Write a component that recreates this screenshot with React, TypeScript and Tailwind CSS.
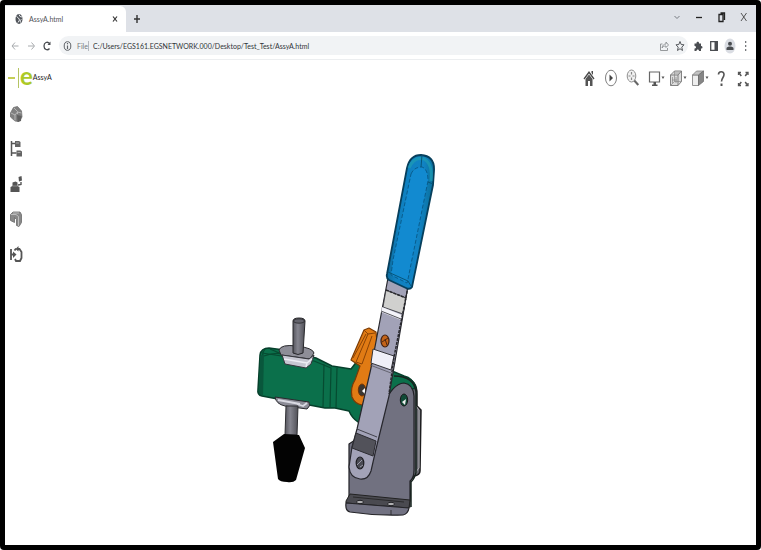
import React from "react";

type IconProps = { children: React.ReactNode; className?: string };

const Icon = ({ children, className = "h-5 w-[22px]" }: IconProps) => (
  <svg viewBox="0 0 22 20" className={className} fill="none" stroke="currentColor" aria-hidden="true">
    {children}
  </svg>
);

const SmallIcon = ({ children }: IconProps) => (
  <svg viewBox="0 0 16 16" className="size-4" fill="none" stroke="currentColor" aria-hidden="true">
    {children}
  </svg>
);

const windowButtons = [
  { label: "Search tabs", icon: <path d="M8.5 9l2.5 2.5L13.5 9" stroke="#777b82" /> },
  { label: "Minimize", icon: <path d="M8 10.5h6" stroke="#222" strokeWidth="1.3" /> },
  {
    label: "Restore",
    icon: <path d="M9 7.5h4v7H9zM10.5 6h4v7" stroke="#222" strokeWidth="1.3" />,
  },
  { label: "Close", icon: <path d="M9 6l5.5 8M14.5 6L9 14" stroke="#444" strokeWidth="0.9" /> },
];

const viewerTools = [
  {
    label: "Home",
    icon: (
      <>
        <path d="M5.5 10.5L11 3l5.5 7.5-1 1L11 5.5l-4.5 6z" fill="#4a4a4a" stroke="none" />
        <path d="M13.5 3H15v4l-1.5-2z" fill="#4a4a4a" stroke="none" />
        <path d="M7.5 11L11 6.500l3.500 4.500v7H12v-5h-2v5H7.500z" fill="#555" stroke="none" />
      </>
    ),
  },
  {
    label: "Play",
    icon: (
      <>
        <ellipse cx="11" cy="10" rx="5.5" ry="7.8" fill="#fff" stroke="#707070" strokeWidth="0.9" />
        <path d="M9.5 6.500l3.500 3.500-3.500 3.500z" fill="#444" stroke="none" />
      </>
    ),
  },
  {
    label: "Zoom",
    icon: (
      <>
        <ellipse cx="9.5" cy="8" rx="4.3" ry="6" fill="#f1f1f1" stroke="#858585" strokeWidth="0.9" />
        <path d="M9.500 4v2.500M9.500 9.500V12M6.500 8h2M10.500 8h2" stroke="#888" strokeWidth="1.2" />
        <path d="M12.300 12.500l4 4.500" stroke="#666" strokeWidth="2" />
      </>
    ),
  },
  {
    label: "Display",
    icon: (
      <>
        <path d="M5.500 4h10v10h-10z" fill="#fff" stroke="#666" strokeWidth="1.2" />
        <path d="M9.500 14H12v2.500h1.500V18H8v-1.500h1.500z" fill="#555" stroke="none" />
        <path d="M17.500 8.500h3l-1.500 2.500z" fill="#555" stroke="none" />
      </>
    ),
  },
  {
    label: "View mode",
    icon: (
      <>
        <path d="M4.500 7l4-4h7v10.500L12 17.500H4.500zM4.500 7H12v10.500M12 7l3.500-4" fill="#dcdcdc" stroke="#777" strokeWidth="0.9" />
        <path d="M8.500 3v10.500h7M8.500 13.500l-4 4M6.500 9v6M10 9v6M6 12h5M9 5h5" stroke="#888" strokeWidth="0.7" />
        <path d="M17.500 8.500h3l-1.500 2.500z" fill="#555" stroke="none" />
      </>
    ),
  },
  {
    label: "Orientation",
    icon: (
      <>
        <path d="M4.500 7h6v10.500h-6z" fill="#eee" stroke="#888" strokeWidth="0.9" />
        <path d="M4.500 7l4-4h7l-5 4z" fill="#c2c2c2" stroke="#777" strokeWidth="0.7" />
        <path d="M10.500 7l5-4v10.500l-5 4z" fill="#868686" stroke="#666" strokeWidth="0.7" />
        <path d="M17.500 8.500h3l-1.500 2.500z" fill="#555" stroke="none" />
      </>
    ),
  },
  {
    label: "Help",
    icon: (
      <>
        <path d="M8.500 6.500c0-3.500 5.500-4 5.500 0 0 3-2.500 3.500-2.500 7" stroke="#555" strokeWidth="1.6" />
        <path d="M10.500 15.500h2V18h-2z" fill="#555" stroke="none" />
      </>
    ),
  },
  {
    label: "Full screen",
    icon: (
      <>
        <path d="M6.500 7V4.500H9M13.500 4.500H16V7M6.500 15v2.500H9M16 15v2.500h-2.500" stroke="#555" strokeWidth="1.3" />
        <path d="M7 5l2.300 3M15.500 5l-2.300 3M7 17l2.300-3M15.500 17l-2.300-3" stroke="#555" strokeWidth="1.5" />
      </>
    ),
  },
];

const sideTools = [
  {
    label: "Assembly",
    icon: (
      <>
        <path d="M5.500 9l3-5.500 4-1 4 4.500.5 6-3 4.500-4-.5-4.500-4z" fill="#808080" stroke="#707070" strokeWidth="0.8" />
        <path d="M6 9l4 2v5.500M10 11l2.500-3 4 1M9 4l3.500 3.500V10" stroke="#bbb" strokeWidth="0.9" />
        <path d="M12 11l4.500 1-.5 5-3.500 1z" fill="#606060" stroke="none" />
      </>
    ),
  },
  {
    label: "Structure tree",
    icon: (
      <>
        <path d="M6.500 2v15M6.500 4.500h4M6.500 14h5" stroke="#555" strokeWidth="1.5" />
        <path d="M10 2h4l1.500 1v5H10zM11.500 11.500h4l1.500 1v5h-5.500z" fill="#636363" stroke="none" />
        <path d="M11 4h3M12.500 13.500h3" stroke="#bbb" strokeWidth="0.8" />
      </>
    ),
  },
  {
    label: "Explode",
    icon: (
      <>
        <path d="M5.500 13l2-1V8.500l3-1 2 1V12l2 1v5h-9z" fill="#555" stroke="none" />
        <path d="M13.500 3l3-1 .5 4.500-3 1z" fill="#555" stroke="none" />
        <path d="M16 8v2.500l-3 .5" stroke="#555" strokeWidth="1.4" />
        <path d="M7.500 12h5" stroke="#999" strokeWidth="0.8" />
      </>
    ),
  },
  {
    label: "Section",
    icon: (
      <>
        <path d="M5.500 5.500L8 3h7l1.500 2.500v8L14 17.500l-2.500-1v-6l-2-2v5l-4-2z" fill="#898989" stroke="#696969" strokeWidth="0.8" />
        <path d="M6 5.500h5l2.500 2V17M8 4h6" stroke="#ccc" strokeWidth="0.8" />
      </>
    ),
  },
  {
    label: "Rotate",
    icon: (
      <>
        <path d="M6 5v11M6 10.500h3.500" stroke="#555" strokeWidth="1.8" />
        <path d="M8 7.500l3.500 3L8 14z" fill="#555" stroke="none" />
        <path d="M9.500 6.500L11 4.500M12 5h2.500l2 3v6L15 17h-4l-1-2" stroke="#555" strokeWidth="1.8" />
        <path d="M13.500 2L10.500 5l3 2.500z" fill="#555" stroke="none" />
      </>
    ),
  },
];

const TabStrip = () => (
  <div className="flex h-[27px] items-stretch bg-[#dee1e7]">
    <div className="mt-px flex w-[121px] items-center rounded-tr-md bg-white pr-[3px] pl-2">
      <SmallIcon>
        <ellipse cx="6" cy="8" rx="3.5" ry="5" fill="#50545a" stroke="none" />
        <path d="M3.500 5.500l2 1.500 1 2-1.500 2.500M6 3.500l1 2 2 .5M8.500 8.500l-1.500 1 .5 2" stroke="#e8eaed" />
      </SmallIcon>
      <span className="flex-1 text-[7px] text-[#4f5358]">AssyA.html</span>
      <button aria-label="Close tab" className="text-[#333]">
        <SmallIcon>
          <path d="M6 5.500l4 5M10 5.500l-4 5" strokeWidth="1.2" />
        </SmallIcon>
      </button>
    </div>
    <button aria-label="New tab" className="ml-[3px] text-[#333]">
      <SmallIcon>
        <path d="M8 4v8M5 8h6" strokeWidth="1.4" />
      </SmallIcon>
    </button>
    <div className="ml-auto flex items-center pr-0.5 pb-1">
      {windowButtons.map((b) => (
        <button key={b.label} aria-label={b.label}>
          <Icon>{b.icon}</Icon>
        </button>
      ))}
    </div>
  </div>
);

const AddressBar = () => (
  <div className="flex h-7 items-center border-b border-[#eceef0] bg-white px-0.5">
    <button aria-label="Back" className="text-[#a8abae]">
      <SmallIcon>
        <path d="M11.500 8h-6M8 4.500L5 8l3 3.500" />
      </SmallIcon>
    </button>
    <button aria-label="Forward" className="text-[#a8abae]">
      <SmallIcon>
        <path d="M5 8h6M8.500 4.500l3 3.500-3 3.500" />
      </SmallIcon>
    </button>
    <button aria-label="Reload" className="text-[#4a4d51]">
      <SmallIcon>
        <path d="M10.500 5.500C8.500 3 5 4.500 5 8s3.500 5 5.500 2.500" strokeWidth="1.3" />
        <path d="M11.500 3.500V7h-3z" fill="currentColor" stroke="none" />
      </SmallIcon>
    </button>
    <div className="ml-1 flex h-[19px] flex-1 items-center rounded-full bg-[#f1f3f5] pl-0.5">
      <span className="text-[#5f6368]">
        <SmallIcon>
          <ellipse cx="6.5" cy="8" rx="3.3" ry="4.3" />
          <path d="M6.500 7.500V11M6.500 5v1.200" strokeWidth="1.2" />
        </SmallIcon>
      </span>
      <label htmlFor="address" className="w-3 border-r border-[#b6b9bd] text-[7px] leading-[10px] text-[#75797d]">
        File
      </label>
      <input
        id="address"
        defaultValue="C:/Users/EGS161.EGSNETWORK.000/Desktop/Test_Test/AssyA.html"
        className="ml-1 h-4 min-w-0 flex-1 bg-transparent text-[7px] text-[#303338] outline-none"
      />
      <button aria-label="Share" className="text-[#8b8e92]">
        <SmallIcon>
          <path d="M6.500 6h-2v6.500h7V10M6 10c.5-3 2-4 4-4V4l2.500 3L10 9.500V8c-2 0-3 .5-4 2z" strokeWidth="0.9" />
        </SmallIcon>
      </button>
      <button aria-label="Bookmark" className="text-[#55585c]">
        <SmallIcon>
          <path d="M8 3.500l1.200 3 2.800.3-2.200 2.400.7 3.300L8 10.700l-2.500 1.800.7-3.300L4 6.800l2.800-.3z" />
        </SmallIcon>
      </button>
    </div>
    <div className="ml-0.5 flex text-[#4a4d51]">
      <button aria-label="Extensions">
        <SmallIcon>
          <path d="M4.500 5.500h2c-.5-2.500 3-2.500 2.500 0h2V8c2-.5 2 3 0 2.500V13H9c0-2-2.500-2-2.500 0h-2v-2.500c2 0 2-2.500 0-2.500z" fill="currentColor" stroke="none" />
        </SmallIcon>
      </button>
      <button aria-label="Side panel">
        <SmallIcon>
          <path d="M4.700 3.700h6.600v8.600H4.700z" strokeWidth="1.3" />
          <path d="M8.500 3.500H12v9H8.500z" fill="currentColor" stroke="none" />
        </SmallIcon>
      </button>
      <button aria-label="Profile">
        <SmallIcon>
          <ellipse cx="8" cy="8" rx="5.5" ry="7.5" fill="#dadde3" stroke="none" />
          <circle cx="8" cy="5.7" r="2" fill="currentColor" stroke="none" />
          <path d="M4.500 12v-2c1-2 6-2 7 0v2z" fill="currentColor" stroke="none" />
        </SmallIcon>
      </button>
      <button aria-label="Menu">
        <SmallIcon>
          <path d="M7 4h1.300M7 8h1.300M7 12h1.300" strokeWidth="1.3" />
        </SmallIcon>
      </button>
    </div>
  </div>
);

const ClampModel = () => (
  <svg viewBox="28 95 728 450" className="h-full w-full" role="img" aria-label="Toggle clamp assembly" strokeLinejoin="round">
    <defs>
      <linearGradient id="rod" x1="0" x2="1">
        <stop offset="0" stopColor="#55555d" />
        <stop offset="0.4" stopColor="#85858f" />
        <stop offset="1" stopColor="#505057" />
      </linearGradient>
      <linearGradient id="grip" x1="0" y1="0.3" x2="1" y2="0.5">
        <stop offset="0" stopColor="#0d5f87" />
        <stop offset="0.3" stopColor="#0f80c0" />
        <stop offset="0.7" stopColor="#1183c4" />
        <stop offset="1" stopColor="#086a90" />
      </linearGradient>
    </defs>

    {/* rear plate */}
    <path d="M405 378q12 2 12 16v12l4 4-1 61q0 4-6 5l-4 5v20l-8 2z" fill="#65656d" stroke="#1c1c1e" strokeWidth="1.5" />
    <path d="M416 406l3 4v58l-4 5" fill="none" stroke="#b0b0b5" strokeWidth="1" />
    <ellipse cx="408" cy="494" rx="3" ry="7" fill="#19191b" />

    {/* green arm */}
    <path
      d="M258 389L260 355Q261 348 269 348L284 350L316 358L332 366L351 369L358 360L392 371L404 376Q413 378 416 388L400 392L376 425L358 422Q352 418 349 411L335 408L325 408L262 396Q257 395 258 389Z"
      fill="#0b704b"
      stroke="#063f2b"
      strokeWidth="1.5"
    />
    <path d="M265 349Q261 354 261 367L260 395M262 353L314 361L331 368L330 408M264 356Q273 352 284 354M324 364L323 407M337 368L336 408M270 349L284 355" fill="none" stroke="#064b31" strokeWidth="1.2" />
    <path d="M260 356L264 354L263 396L259 393Z" fill="#09573c" />

    {/* spindle */}
    <path d="M279 350q2-6 18-4t17 7l-4 6-29-4z" fill="#8e8e98" stroke="#29292c" strokeWidth="1" />
    <path d="M293 321q0-3 6-3t6 3l-2 32q-5 3-10 0z" fill="url(#rod)" stroke="#27272b" strokeWidth="1" />
    <ellipse cx="299" cy="321" rx="5.5" ry="2.2" fill="#63636c" stroke="#242427" strokeWidth="0.8" />
    <path d="M282 355l27 4 5-4-3 9-5 4-21-4z" fill="#c7c7d2" stroke="#35353c" strokeWidth="1" />
    <path d="M284 359l23 4 5-4M307 363l-1 4" fill="none" stroke="#ededf4" strokeWidth="1.5" />
    <path d="M275 397l34 5q2 4-2 7l-22-3q-9-2-10-9z" fill="#8c8c97" stroke="#29292e" strokeWidth="1" />
    <path d="M278 400l22 4M297 404l6 2 4-3" fill="none" stroke="#d9d9e2" strokeWidth="1.8" />
    <path d="M286 406h12l-1 29h-12z" fill="url(#rod)" stroke="#2e2e32" strokeWidth="1" />
    <path d="M284 434l15 1 6 13-9 32q-3 3-9 2-7 0-9-3l-5-37z" fill="#030303" />

    {/* main bracket */}
    <path
      d="M349 504V444L373 428L384 405Q392 384 404 383Q413 384 414 396V470Q414 478 410 481V507Z"
      fill="#717180"
      stroke="#202025"
      strokeWidth="1.2"
    />
    <path d="M394 376Q414 376 416 392V472Q415 478 411 482V507" fill="none" stroke="#17241f" strokeWidth="1.5" />
    <path d="M346 501L350 494L410 500L409 508L346 503Z" fill="#4a4a50" stroke="#222" strokeWidth="1" />
    <path d="M346 503L409 508Q408 514 403 515Q376 516 350 512Q345 511 346 503Z" fill="#727282" stroke="#252529" strokeWidth="1.2" />
    <path d="M353 497l51 5M391 510v5" stroke="#222" strokeWidth="0.8" />
    <ellipse cx="360" cy="502" rx="3.5" ry="1.7" fill="#b2b2b4" stroke="#202024" />
    <ellipse cx="391" cy="504" rx="3.5" ry="1.7" fill="#b2b2b4" stroke="#202024" />
    <ellipse cx="404" cy="400" rx="3.7" ry="6" fill="#104b37" stroke="#17171a" />
    <path d="M402 402l4-3-1 6z" fill="#eee" />

    {/* orange link */}
    <path
      d="M364 330L369 328L376 332L378 352L372 396L362 405Q355 404 352 397Q350 388 355 380L360 366L351 360Z"
      fill="#e17b14"
      stroke="#7b3b05"
      strokeWidth="1.2"
    />
    <path d="M364 330l4 4-12 28 6 2 10-28M368 334l7-1M353 358l13-24" fill="none" stroke="#8a4306" strokeWidth="1" />
    <ellipse cx="362" cy="390" rx="3.7" ry="6" fill="#3c3630" stroke="#713404" />
    <path d="M362 391l3-3v6z" fill="#fff" />

    {/* handle */}
    <path
      d="M388 278L408 286L389 396L376 449L371 471Q368 480 360 479Q350 478 349 467L352 447L357 429L371 368Z"
      fill="#a2a2b7"
      stroke="#27272d"
      strokeWidth="1.2"
    />
    <path d="M386 290l20 8-3 16-20-7z" fill="#d0d0ce" stroke="#303035" strokeWidth="0.8" />
    <path d="M382 307l20 8-1 5-20-8z" fill="#f4f4fa" />
    <path d="M373 349l21 7-3 14-20-7z" fill="#f0f0f8" stroke="#343439" strokeWidth="1" />
    <path d="M370 365l21 8" stroke="#54545e" strokeWidth="0.8" />
    <path d="M356 433L376 441L373 456L352 448Z" fill="#52525a" stroke="#2c2c31" strokeWidth="1" />
    <path d="M357 429L377 437M381 311l20 8" stroke="#292930" strokeWidth="0.8" />
    <path d="M386 290l20 8M408 287l-14 70-5 37" fill="none" stroke="#28282c" strokeWidth="1.5" strokeDasharray="3 1" />
    <ellipse cx="385" cy="341" rx="4" ry="6" fill="#c46419" stroke="#422111" strokeWidth="1.2" />
    <path d="M382 342l6-4M385 339l2 6" stroke="#4f2912" strokeWidth="1" />
    <ellipse cx="360" cy="463" rx="3.8" ry="6" fill="#494a53" stroke="#1d1d22" strokeWidth="1.2" />
    <path d="M357 465l5-5M360 467l3-2" stroke="#9a9aa9" strokeWidth="1" />

    {/* blue grip */}
    <path d="M407 168q3-13 14-13 14 1 13 16l-1 14-21 102q-2 3-6 1l-17-8q-3-2-2-6z" fill="url(#grip)" stroke="#073f5c" strokeWidth="1.8" />
    <path d="M409 168q5-12 15-9 9 5 7 22" fill="none" stroke="#1f9db2" strokeWidth="3" opacity="0.7" />
    <path d="M411 174q3-7 11-7 6 2 6 14l-20 98-1 4-16-8 2-15z" fill="#128ad0" stroke="#085887" strokeWidth="0.9" strokeDasharray="4 2" />
    <path d="M422 155l-1 12M428 182l5 2M388 272l20 9 3 5" fill="none" stroke="#075579" strokeWidth="1" />
  </svg>
);

const App = () => {
  return (
    <div className="flex h-screen flex-col overflow-hidden rounded border-[5px] border-black bg-white font-['Lato',sans-serif]">
      <TabStrip />
      <AddressBar />

      <header className="flex h-[35px] items-center justify-between pr-0.5 pl-[3px]">
        <div className="flex items-center">
          <svg viewBox="0 0 12 22" className="h-[22px] w-3" fill="none" aria-hidden="true">
            <path d="M0 11h7" stroke="#c5ce56" strokeWidth="2" />
            <path d="M10.500 1v20" stroke="#b5c464" strokeWidth="1" />
          </svg>
          <span className="pb-1 text-2xl leading-5 font-bold text-[#acc927]">e</span>
          <h1 className="text-[7px] text-[#222]">AssyA</h1>
        </div>
        <nav className="flex" aria-label="View tools">
          {viewerTools.map((tool) => (
            <button key={tool.label} aria-label={tool.label}>
              <Icon>{tool.icon}</Icon>
            </button>
          ))}
        </nav>
      </header>

      <div className="flex min-h-0 flex-1">
        <aside className="flex w-[23px] shrink-0 flex-col gap-[15px] pt-[9px]">
          {sideTools.map((tool) => (
            <button key={tool.label} aria-label={tool.label}>
              <Icon>{tool.icon}</Icon>
            </button>
          ))}
        </aside>
        <main className="min-w-0 flex-1">
          <ClampModel />
        </main>
      </div>
    </div>
  );
};

export default App;
